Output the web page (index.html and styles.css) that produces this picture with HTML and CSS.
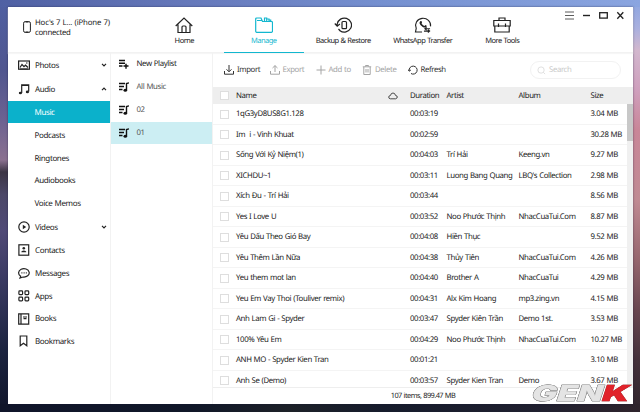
FILE: index.html
```html
<!DOCTYPE html>
<html lang="en">
<head>
<meta charset="utf-8">
<title>Music manager</title>
<link rel="stylesheet" href="styles.css">
</head>
<body>
<svg class="defs" width="0" height="0">
  <symbol id="note-list" viewBox="0 0 10 10"><path d="M0 1.500h6M0 4.500h5M0 7.500h3.500M7.500 8V1.500L10 .8" fill="none" stroke="currentColor" stroke-width="1.400"/><ellipse cx="6.300" cy="8.300" rx="1.800" ry="1.500"/></symbol>
  <symbol id="chev" viewBox="0 0 6 4"><path d="M1 .8l2 2 2-2" fill="none" stroke="currentColor" stroke-width="1.200"/></symbol>
</svg>
<div class="window">
  <header class="top">
    <div class="device">
      <svg width="8" height="12" viewBox="0 0 8 12"><rect x=".6" y=".6" width="6.800" height="10.800" rx="1.600" fill="none" stroke="#222"/><path d="M2.500 1h3M2.500 11h3" stroke="#222"/></svg>
      <div><p class="devname">Hoc's 7 L... (iPhone 7)</p><p class="devstate">connected</p></div>
    </div>
    <nav class="tabs">
      <a class="tab home"><svg viewBox="0 0 18 16"><path d="M.7 9L9 1l8.300 8M3 7.500v8h12v-8M7 15v-5q0-1 1-1h2q1 0 1 1v5"/></svg><span>Home</span></a>
      <a class="tab manage active"><svg viewBox="0 0 18 16"><path d="M.7 14V2q0-1 1-1H6l1.500 3.500h9q1 0 1 1V14q0 1.300-1 1.300H1.700q-1 0-1-1.300zM2 3.500h4.500M9.500 4.500V1h2.200v3.500M11.700 2h2.300v2.500M14 3h1.700v1.500"/></svg><span>Manage</span></a>
      <a class="tab backup"><svg viewBox="0 0 18 16"><path d="M3.200 9.500V7A7.200 7 0 1 1 6 13.700M.8 6.500l2.400 2.700 2.700-2.200M4.500 12l1.800 2"/><rect x="8" y="4.500" width="4.500" height="7.200" rx="1"/></svg><span>Backup &amp; Restore</span></a>
      <a class="tab whats"><svg viewBox="0 0 18 17"><path d="M8 16H1l.8-4A8 7.500 0 1 1 17 10M16.500 12.500h-5.500m1.800-1.500L11 12.500l1.800 1.500M10 15h6m-1.800-1.500L16 15l-1.800 1.500"/><path class="solid" d="M6 4.500q1.500-.8 2 1l-.5 1.500q1 2 3 2.500l1.200-1q2 .7 1 2-1.500 1.400-4 0-3-1.800-3.500-4.200z"/></svg><span>WhatsApp Transfer</span></a>
      <a class="tab tools"><svg viewBox="0 0 18 16"><path d="M.8 3.500h16.400V9H.8zM1.800 9v6h14.400V9M6 3.500V1h6v2.500M5.500 6.500V10M12.500 6.500V10"/></svg><span>More Tools</span></a>
    </nav>
    <svg class="controls" width="60" height="10" viewBox="0 0 60 10"><path d="M0 1h9M0 4.500h9M0 8h9" stroke="#333" stroke-width=".8"/><path d="M18 4.500h7" stroke="#222" stroke-width="1.400"/><rect x="34.700" y="1.700" width="7.600" height="5.400" fill="none" stroke="#222" stroke-width="1.300"/><path d="M52.300 1.200l6 6.500m0-6.500l-6 6.500" stroke="#222" stroke-width="1.300"/></svg>
  </header>
  <main class="body">
    <aside class="side">
      <a class="item wide"><svg viewBox="0 0 12 12"><rect x=".6" y="2" width="10.800" height="8.200"/><path d="M2 8.500l2-3 2 2.200 1.500-1.500L10 8.500M8 4h1.500M2 10h8"/></svg><span>Photos</span><svg class="chev"><use href="#chev"/></svg></a>
      <a class="item wide"><svg viewBox="0 0 12 12"><path d="M3.700 10V1.800h7V8.500M3.700 2.500h7"/><ellipse class="solid" cx="2.400" cy="10" rx="1.600" ry="1.300"/><ellipse class="solid" cx="9.400" cy="8.900" rx="1.600" ry="1.300"/></svg><span>Audio</span><svg class="chev up"><use href="#chev"/></svg></a>
      <a class="sub selected">Music</a>
      <a class="sub">Podcasts</a>
      <a class="sub">Ringtones</a>
      <a class="sub">Audiobooks</a>
      <a class="sub">Voice Memos</a>
      <a class="item wide"><svg viewBox="0 0 12 12"><circle cx="6" cy="6" r="5.200"/><path class="solid" d="M4.800 3.800v4.400L8.200 6z"/></svg><span>Videos</span><svg class="chev"><use href="#chev"/></svg></a>
      <a class="item"><svg viewBox="0 0 12 12"><rect x=".9" y=".8" width="9.800" height="10.400"/><circle class="solid" cx="5.800" cy="4.200" r="1.300"/><path class="solid" d="M3.400 8.300V7.400q2.400-1.700 4.800 0v.9z"/></svg><span>Contacts</span></a>
      <a class="item"><svg viewBox="0 0 12 12"><path d="M2.700 9.200A5.300 4.200 0 1 1 5 10l-3 1z"/><path d="M3.400 5.800h1M5.600 5.800h1M7.800 5.800h1"/></svg><span>Messages</span></a>
      <a class="item"><svg viewBox="0 0 12 12"><rect x=".9" y=".9" width="3.700" height="3.700" rx=".8"/><rect x="7" y=".9" width="3.700" height="3.700" rx=".8"/><rect x=".9" y="7.200" width="3.700" height="3.700" rx=".8"/><rect x="7" y="7.200" width="3.700" height="3.700" rx=".8"/></svg><span>Apps</span></a>
      <a class="item"><svg viewBox="0 0 12 12"><path d="M.7.800h10v10.400h-10zM3 .8v10.400M5 4h4M5.500 5.700h3"/></svg><span>Books</span></a>
      <a class="item"><svg viewBox="0 0 12 12"><path d="M2.200 1h6.600v9.800L5.500 8.300l-3.300 2.500z"/></svg><span>Bookmarks</span></a>
    </aside>
    <aside class="lists">
      <a class="list new"><svg viewBox="0 0 10 10"><path d="M0 1.500h6M0 4.300h6M0 7h3.500M4.500 7h5M7 4.700v5" fill="none" stroke="currentColor" stroke-width="1.400"/></svg>New Playlist</a>
      <a class="list"><svg><use href="#note-list"/></svg>All Music</a>
      <a class="list"><svg><use href="#note-list"/></svg>02</a>
      <a class="list current"><svg><use href="#note-list"/></svg>01</a>
    </aside>
    <section class="content">
      <div class="toolbar">
        <a class="tool import"><svg viewBox="0 0 10 10"><path d="M5 0v6.500M2.500 4.300L5 6.800l2.500-2.500M.5 6v3.200h9V6"/></svg>Import</a>
        <a class="tool export off"><svg viewBox="0 0 10 10"><path d="M5 7V.7M2.500 3L5 .6 7.500 3M.5 6v3.200h9V6"/></svg>Export</a>
        <a class="tool add off"><svg viewBox="0 0 10 10"><path d="M5 .5v9M.5 5h9"/></svg>Add to</a>
        <a class="tool delete off"><svg viewBox="0 0 10 10"><path d="M.8 1.800h8.400M3.500 1.500V.5h3v1M1.800 2v7.500h6.400V2M4 4v3.500M6 4v3.500"/></svg>Delete</a>
        <a class="tool refresh"><svg viewBox="0 0 10 10"><path d="M1.200 5.800A4 4 0 1 1 3 8.500M0 4.500l1.200 1.700 1.700-1.200"/></svg>Refresh</a>
        <div class="search"><svg viewBox="0 0 10 10"><circle cx="4.500" cy="4.500" r="3.500"/><path d="M7 7l2 2"/></svg>Search</div>
      </div>
      <div class="row head"><i class="box"></i><span class="name">Name</span><svg class="cloud" viewBox="0 0 10 8"><path d="M2.300 6.800Q.6 6.500.7 5q.2-1.400 1.700-1.500Q3 1 5 1t2.600 2.500Q9.300 3.700 9.300 5T7.700 6.800z"/></svg><span class="dur">Duration</span><span class="artist">Artist</span><span class="album">Album</span><span>Size</span></div>
      <div class="scroll">
        <div class="rows">
          <div class="row"><i class="box"></i><span class="name">1qG3yD8US8G1.128</span><span class="dur">00:03:19</span><span class="artist"></span><span class="album"></span><span>3.04 MB</span></div>
          <div class="row"><i class="box"></i><span class="name">Im&nbsp; i - Vinh Khuat</span><span class="dur">00:02:59</span><span class="artist"></span><span class="album"></span><span>30.28 MB</span></div>
          <div class="row"><i class="box"></i><span class="name">Sống Với Kỷ Niệm(1)</span><span class="dur">00:04:03</span><span class="artist">Trí Hải</span><span class="album">Keeng.vn</span><span>9.27 MB</span></div>
          <div class="row"><i class="box"></i><span class="name">XICHDU~1</span><span class="dur">00:03:11</span><span class="artist">Luong Bang Quang</span><span class="album">LBQ's Collection</span><span>2.98 MB</span></div>
          <div class="row"><i class="box"></i><span class="name">Xích Đu - Trí Hải</span><span class="dur">00:03:44</span><span class="artist"></span><span class="album"></span><span>8.56 MB</span></div>
          <div class="row"><i class="box"></i><span class="name">Yes I Love U</span><span class="dur">00:03:52</span><span class="artist">Noo Phước Thịnh</span><span class="album">NhacCuaTui.Com</span><span>8.87 MB</span></div>
          <div class="row"><i class="box"></i><span class="name">Yêu Dấu Theo Gió Bay</span><span class="dur">00:04:08</span><span class="artist">Hiền Thục</span><span class="album"></span><span>9.52 MB</span></div>
          <div class="row"><i class="box"></i><span class="name">Yêu Thêm Lần Nữa</span><span class="dur">00:04:38</span><span class="artist">Thủy Tiên</span><span class="album">NhacCuaTui.Com</span><span>4.26 MB</span></div>
          <div class="row"><i class="box"></i><span class="name">Yeu them mot lan</span><span class="dur">00:04:40</span><span class="artist">Brother A</span><span class="album">NhacCuaTui</span><span>4.29 MB</span></div>
          <div class="row"><i class="box"></i><span class="name">Yeu Em Vay Thoi (Touliver remix)</span><span class="dur">00:04:31</span><span class="artist">Alx Kim Hoang</span><span class="album">mp3.zing.vn</span><span>4.15 MB</span></div>
          <div class="row"><i class="box"></i><span class="name">Anh Lam Gi - Spyder</span><span class="dur">00:03:47</span><span class="artist">Spyder Kiên Trần</span><span class="album">Demo 1st.</span><span>3.53 MB</span></div>
          <div class="row"><i class="box"></i><span class="name">100% Yêu Em</span><span class="dur">00:04:29</span><span class="artist">Noo Phước Thịnh</span><span class="album">NhacCuaTui.Com</span><span>10.27 MB</span></div>
          <div class="row"><i class="box"></i><span class="name">ANH MO - Spyder Kien Tran</span><span class="dur">00:01:21</span><span class="artist"></span><span class="album"></span><span>3.10 MB</span></div>
          <div class="row"><i class="box"></i><span class="name">Anh Se (Demo)</span><span class="dur">00:03:57</span><span class="artist">Spyder Kien Tran</span><span class="album">Demo</span><span>3.67 MB</span></div>
        </div>
        <div class="track"><div class="thumb"></div></div>
      </div>
      <footer class="status">107 items, 899.47 MB</footer>
    </section>
  </main>
</div>
<svg class="mark" width="106" height="24" viewBox="0 0 106 24"><g transform="translate(2 19.800) skewX(-18) scale(1.620 1)"><text class="gen" x="0" y="0" textLength="44" lengthAdjust="spacingAndGlyphs">GEN</text><text class="k" x="43.500" y="0" textLength="16.500" lengthAdjust="spacingAndGlyphs">K</text></g></svg>
</body>
</html>
```
FILE: styles.css
```css
* { box-sizing: border-box; }
body {
  margin: 0;
  width: 640px;
  height: 412px;
  overflow: hidden;
  padding: 7px 7px 8px 8px;
  background:
    linear-gradient(90deg, #10152a, #101728 30%, #1d2128 45%, #161c2c 60%, #20202f 85%, #2f242c) 0 404px / 640px 8px no-repeat,
    linear-gradient(90deg, #4f60a3, #6679bb 30%, #7590d0 60%, #8aa5e0) 0 0 / 640px 7px no-repeat,
    linear-gradient(#8ba5e0, #a9b0df 28px, #d2b7ce 50px, #cf9fbd 90px, #c98698 130px, #c08a93 200px, #96666e 260px, #694650 310px, #44313b 360px, #2f242c) 632px 0 / 8px 412px no-repeat,
    linear-gradient(#4f60a3, #50568f 70px, #6c6291 120px, #8b7190 160px, #3c3545 172px, #4c4868 195px, #504a77 230px, #3a3a62 280px, #1c2440 350px, #10152a) 0 0 / 8px 412px no-repeat;
  font-family: "Noto Sans", "Open Sans", sans-serif;
  font-size: 7.800px;
  letter-spacing: -.38px;
  word-spacing: .4px;
  text-rendering: geometricPrecision;
  color: #222;
}
p { margin: 0; }
svg { display: block; fill: none; stroke: currentColor; flex: none; }
.defs { position: absolute; }
symbol ellipse, .solid { fill: currentColor; stroke: none; }
.window {
  display: flex;
  flex-direction: column;
  width: 625px;
  height: 397px;
  background: #fff;
  box-shadow: 0 0 2px rgba(30, 30, 60, .6);
}
.top {
  display: flex;
  height: 46px;
  flex: none;
  border-bottom: 1px solid #f2f2f2;
  box-shadow: 0 1px 1px #f6f6f6;
}
.device {
  display: flex;
  width: 136.500px;
  padding: 12px 0 0 15px;
  gap: 4px;
  line-height: 9.500px;
  letter-spacing: -.17px;
}
.devstate { letter-spacing: -.3px; }
.device svg { margin-top: 2px; }
.tabs { display: flex; letter-spacing: -.5px; }
.tab {
  display: flex;
  flex-direction: column;
  align-items: center;
  width: 79.500px;
  height: 46px;
  padding-top: 10px;
  line-height: 10px;
  font-size: 7.500px;
  white-space: nowrap;
}
.tab svg { width: 18px; height: 16px; margin-bottom: 2.800px; stroke-width: 1.200; }
.active { color: #12b7cf; border-bottom: 1.500px solid #12b7cf; }
.controls { margin: 4px 0 0 23px; }
.body { display: flex; flex: 1; min-height: 0; }
.side { width: 103px; border-right: 1px solid #f2f2f2; }
.item, .sub { display: flex; align-items: center; height: 22.850px; font-size: 8px; }
.item { padding-left: 10px; }
.item span { padding-top: .8px; }
.item > svg:first-child { width: 12px; height: 12px; margin-right: 5px; stroke-width: 1.200; }
.wide { height: 23.800px; }
.item .chev { width: 6px; height: 4px; margin: 0 3px 0 auto; }
.item .up { transform: scaleY(-1); }
.sub { padding: .8px 0 0 26.500px; }
.selected { background: #0bb1cb; color: #fff; }
.lists { width: 102px; border-right: 1px solid #f2f2f2; }
.list { display: flex; align-items: center; height: 22.850px; padding-left: 8px; color: #555; }
.list svg { width: 10px; height: 10px; margin-right: 7.500px; color: #111; }
.new { color: #222; }
.current { background: #cceef3; }
.content { display: flex; flex-direction: column; width: 420px; }
.toolbar { display: flex; align-items: center; height: 34px; flex: none; padding-left: 11px; }
.tool { display: flex; align-items: center; gap: 3px; color: #333; white-space: nowrap; }
.tool svg { width: 10px; height: 10px; stroke-width: 1; }
.off { color: #a4a4a4; }
.import { width: 45.500px; }
.export { width: 46px; }
.add { width: 46.500px; }
.delete { width: 45.500px; }
.refresh { width: 122.500px; }
.search {
  display: flex;
  align-items: center;
  width: 91px;
  height: 18px;
  padding-left: 6px;
  gap: 3px;
  border: 1px solid #f2f2f2;
  border-radius: 9px;
  color: #c9c9c9;
}
.search svg { width: 9px; height: 9px; color: #ddd; }
.row {
  display: flex;
  align-items: center;
  height: 20.500px;
  padding: .8px 0 0 7px;
  border-bottom: 1px solid #f4f4f4;
  white-space: nowrap;
  flex: none;
}
.head { height: 17px; background: #eee; border: 0; }
.box { width: 9px; height: 9px; margin-right: 7px; border: 1px solid #dedede; background: #fff; flex: none; }
.name { width: 174px; }
.head .name { width: 152px; }
.cloud { width: 10px; height: 8px; margin-right: 12px; stroke-width: .8; }
.dur { width: 36.500px; }
.artist { width: 72px; }
.album { width: 72px; }
.scroll { display: flex; height: 283px; overflow: hidden; }
.rows { flex: 1; height: 283px; overflow: hidden; }
.track { width: 6px; background: #f0f0f0; }
.thumb { height: 37px; background: #c8c8c8; }
.status {
  display: flex;
  align-items: center;
  justify-content: center;
  flex: 1;
  border-top: 1px solid #eee;
  font-size: 7.400px;
  letter-spacing: -.55px;
}
.mark { position: absolute; left: 528px; top: 381px; overflow: visible; filter: drop-shadow(0 0 .6px #555); }
.mark text { font: 900 22px Inter, "Liberation Sans", sans-serif; letter-spacing: 0; word-spacing: 0; stroke-width: .6; paint-order: stroke; }
.gen { fill: #e4e4e4; stroke: #8c8c8c; }
.k { fill: #e1232b; stroke: #e1232b; }
```
